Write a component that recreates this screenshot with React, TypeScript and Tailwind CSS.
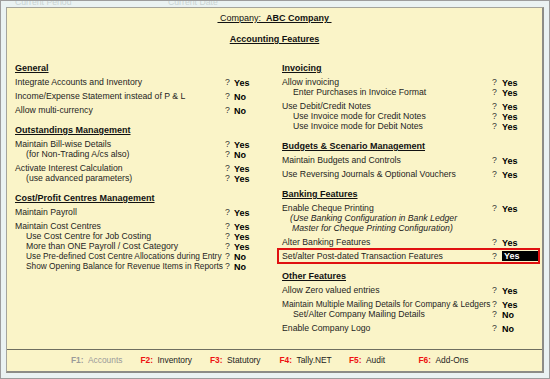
import React from 'react';

type Line = {
  label: string;
  value?: string;
  indent?: 0 | 1 | 2 | 3;
  small?: boolean;
  italic?: boolean;
  highlight?: boolean;
};

type Section = { title: string; items: Line[][] };

const leftSections: Section[] = [
  {
    title: 'General',
    items: [
      [{ label: 'Integrate Accounts and Inventory', value: 'Yes' }],
      [{ label: 'Income/Expense Statement instead of P & L', value: 'No' }],
      [{ label: 'Allow multi-currency', value: 'No' }],
    ],
  },
  {
    title: 'Outstandings Management',
    items: [
      [
        { label: 'Maintain Bill-wise Details', value: 'Yes' },
        { label: '(for Non-Trading A/cs also)', value: 'No', indent: 1 },
      ],
      [
        { label: 'Activate Interest Calculation', value: 'Yes' },
        { label: '(use advanced parameters)', value: 'Yes', indent: 1 },
      ],
    ],
  },
  {
    title: 'Cost/Profit Centres Management',
    items: [
      [{ label: 'Maintain Payroll', value: 'Yes' }],
      [
        { label: 'Maintain Cost Centres', value: 'Yes' },
        { label: 'Use Cost Centre for Job Costing', value: 'Yes', indent: 1 },
        { label: 'More than ONE Payroll / Cost Category', value: 'Yes', indent: 1 },
        { label: 'Use Pre-defined Cost Centre Allocations during Entry', value: 'No', indent: 1, small: true },
        { label: 'Show Opening Balance for Revenue Items in Reports', value: 'No', indent: 1, small: true },
      ],
    ],
  },
];

const rightSections: Section[] = [
  {
    title: 'Invoicing',
    items: [
      [
        { label: 'Allow invoicing', value: 'Yes' },
        { label: 'Enter Purchases in Invoice Format', value: 'Yes', indent: 1 },
      ],
      [
        { label: 'Use Debit/Credit Notes', value: 'Yes' },
        { label: 'Use Invoice mode for Credit Notes', value: 'Yes', indent: 1 },
        { label: 'Use Invoice mode for Debit Notes', value: 'Yes', indent: 1 },
      ],
    ],
  },
  {
    title: 'Budgets & Scenario Management',
    items: [
      [{ label: 'Maintain Budgets and Controls', value: 'Yes' }],
      [{ label: 'Use Reversing Journals & Optional Vouchers', value: 'Yes' }],
    ],
  },
  {
    title: 'Banking Features',
    items: [
      [
        { label: 'Enable Cheque Printing', value: 'Yes' },
        { label: '(Use Banking Configuration in Bank Ledger', indent: 2, italic: true },
        { label: 'Master for Cheque Printing Configuration)', indent: 3, italic: true },
      ],
      [{ label: 'Alter Banking Features', value: 'Yes' }],
      [{ label: 'Set/alter Post-dated Transaction Features', value: 'Yes', highlight: true }],
    ],
  },
  {
    title: 'Other Features',
    items: [
      [{ label: 'Allow Zero valued entries', value: 'Yes' }],
      [
        { label: 'Maintain Multiple Mailing Details for Company & Ledgers', value: 'Yes', small: true },
        { label: 'Set/Alter Company Mailing Details', value: 'No', indent: 1 },
      ],
      [{ label: 'Enable Company Logo', value: 'No' }],
    ],
  },
];

const indentClass = ['pl-0', 'pl-[11px]', 'pl-[8px]', 'pl-[10px]'];

function Row({ line, side }: { line: Line; side: 'left' | 'right' }) {
  const hasValue = line.value !== undefined;
  return (
    <div className="relative flex h-[10px] items-center leading-[10px]">
      <span
        className={[
          'flex-1 whitespace-nowrap text-[#1e1e1e]',
          line.small ? 'text-[8.3px]' : 'text-[8.7px]',
          line.italic ? 'italic' : '',
          indentClass[line.indent ?? 0],
        ].join(' ')}
      >
        {line.label}
      </span>
      {hasValue && (
        <>
          <span className={side === 'left' ? 'w-[9px] text-[8.7px] text-[#333]' : 'w-[10px] text-[8.7px] text-[#333]'}>?</span>
          <span className={side === 'left' ? 'w-[27px]' : 'w-[38px]'}>
            {line.highlight ? (
              <span className="block h-[10px] w-[36px] bg-black pl-[2px] text-[9px] font-bold text-white">{line.value}</span>
            ) : (
              <span className="text-[9px] font-bold text-black">{line.value}</span>
            )}
          </span>
        </>
      )}
      {line.highlight && (
        <div className="pointer-events-none absolute -top-[3px] -bottom-[3px] -left-[5px] right-0 border-2 border-[#e01010]" />
      )}
    </div>
  );
}

function Column({ sections, side }: { sections: Section[]; side: 'left' | 'right' }) {
  return (
    <div className="flex flex-col gap-[10px]">
      {sections.map((s) => (
        <div key={s.title} className="flex flex-col gap-[4px]">
          <div className="h-[10px] text-[9px] font-bold leading-[10px] text-[#111] underline decoration-1 underline-offset-[1px]">
            {s.title}
          </div>
          {s.items.map((group, i) => (
            <div key={i} className="flex flex-col">
              {group.map((line) => (
                <Row key={line.label} line={line} side={side} />
              ))}
            </div>
          ))}
        </div>
      ))}
    </div>
  );
}

const footerKeys = [
  { key: 'F1:', name: 'Accounts', disabled: true },
  { key: 'F2:', name: 'Inventory' },
  { key: 'F3:', name: 'Statutory' },
  { key: 'F4:', name: 'Tally.NET' },
  { key: 'F5:', name: 'Audit' },
  { key: 'F6:', name: 'Add-Ons' },
];

export default function App() {
  return (
    <div className="flex h-[379px] w-[550px] flex-col overflow-hidden border border-[#9c9c9c] bg-[#eaf2f2] px-[5px] pb-[5px] font-['Liberation_Sans',Arial,sans-serif]">
      {/* faint top strip, mostly hidden behind the panel */}
      <div className="flex h-[6px] overflow-hidden">
        <div className="-mt-[4px] flex pl-[9px] text-[8.7px] leading-[10px] text-[#c9d3d3]">
          <span className="w-[153px]">Current Period</span>
          <span>Current Date</span>
        </div>
      </div>

      <div className="flex flex-1 flex-col border-t border-l border-r-2 border-b-2 border-t-[#a4a49c] border-l-[#a4a49c] border-r-[#8c8c86] border-b-[#8c8c86] bg-[#faf4c8]">
        <div className="flex-1">
          {/* Header */}
          <div className="flex flex-col items-center pt-[5px]">
            <div className="h-[10px] text-[9px] leading-[10px] text-[#111] underline decoration-1 underline-offset-[1px]">
              &nbsp;Company:&nbsp; <span className="font-bold">ABC Company</span>&nbsp;
            </div>
            <div className="mt-[11px] h-[10px] text-[9px] font-bold leading-[10px] text-[#111] underline decoration-1 underline-offset-[1px]">
              Accounting Features
            </div>
          </div>

          {/* Feature columns */}
          <div className="mt-[19px] grid grid-cols-[246px_258px] gap-x-[21px] pl-[8px]">
            <Column sections={leftSections} side="left" />
            <Column sections={rightSections} side="right" />
          </div>
        </div>

        {/* Footer */}
        <div className="flex h-[22px] items-center border-t border-[#6e6e60] pl-[64px] text-[8.4px]">
          {footerKeys.map((f) => (
            <div key={f.key} className="flex w-[69.5px] shrink-0 items-center">
              <span className={f.disabled ? 'w-[17px] font-bold text-[#9a9a9a]' : 'w-[17px] font-bold text-[#ee1010]'}>{f.key}</span>
              <span className={f.disabled ? 'text-[#9a9a9a]' : 'text-[#222]'}>{f.name}</span>
            </div>
          ))}
        </div>
      </div>
    </div>
  );
}
